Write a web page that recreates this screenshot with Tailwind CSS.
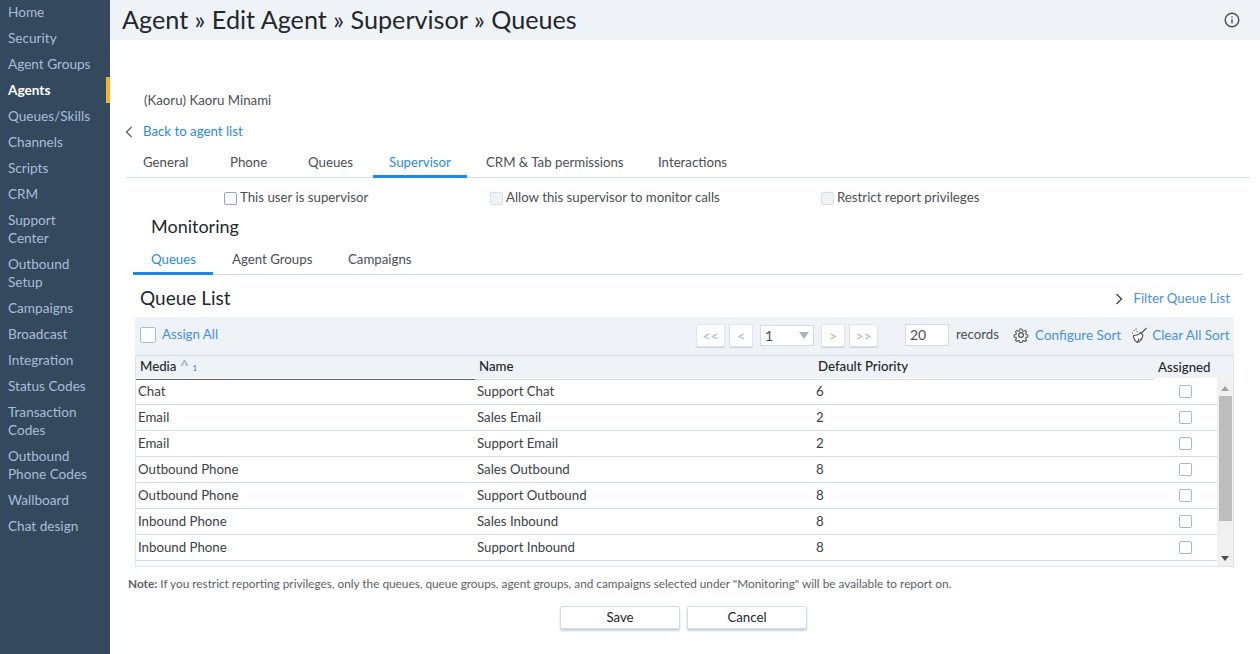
<!DOCTYPE html>
<html lang="en">
<head>
  <meta charset="UTF-8" />
  <title>Agent Supervisor Queues</title>
  <script src="https://cdn.jsdelivr.net/npm/@tailwindcss/browser@4"></script>
</head>
<body class="w-[1260px] h-[654px] overflow-hidden bg-white font-['Lato',sans-serif] text-[13.25px] text-[#4a4f55] flex">

  <!-- sidebar -->
  <nav class="w-[110px] h-full shrink-0 bg-[#34495e] text-[#a9bdd8] text-[13.6px] leading-[18px] flex flex-col">
    <a class="h-[26px] pl-2 pt-[4px] -mt-[1px]">Home</a>
    <a class="h-[26px] pl-2 pt-1">Security</a>
    <a class="h-[26px] pl-2 pt-1">Agent Groups</a>
    <a class="h-[26px] pl-2 pt-1 text-white font-bold border-r-4 border-[#fdb022]">Agents</a>
    <a class="h-[26px] pl-2 pt-1">Queues/Skills</a>
    <a class="h-[26px] pl-2 pt-1">Channels</a>
    <a class="h-[26px] pl-2 pt-1">Scripts</a>
    <a class="h-[26px] pl-2 pt-1">CRM</a>
    <a class="h-[44px] pl-2 pt-1">Support<br />Center</a>
    <a class="h-[44px] pl-2 pt-1">Outbound<br />Setup</a>
    <a class="h-[26px] pl-2 pt-1">Campaigns</a>
    <a class="h-[26px] pl-2 pt-1">Broadcast</a>
    <a class="h-[26px] pl-2 pt-1">Integration</a>
    <a class="h-[26px] pl-2 pt-1">Status Codes</a>
    <a class="h-[44px] pl-2 pt-1">Transaction<br />Codes</a>
    <a class="h-[44px] pl-2 pt-1">Outbound<br />Phone Codes</a>
    <a class="h-[26px] pl-2 pt-1">Wallboard</a>
    <a class="h-[26px] pl-2 pt-1">Chat design</a>
  </nav>

  <main class="flex-1 min-w-0 flex flex-col">
    <!-- page title -->
    <header class="h-10 shrink-0 bg-[#eff3f8] flex items-center justify-between pl-3 pr-5 text-[#23272b]">
      <h1 class="text-[25.2px] leading-[38px] pb-[2px]">Agent » Edit Agent » Supervisor » Queues</h1>
      <svg class="w-4 h-4 text-[#4a4f55]" viewBox="0 0 16 16" fill="none" stroke="currentColor" stroke-width="1.4"><circle cx="8" cy="8" r="6.8" /><path d="M8 7v4.5M8 4.2v1.4" /></svg>
    </header>

    <div class="h-[52px] shrink-0 pl-[34px] pt-[50px] leading-[20px] text-[#4a4f55] box-content -mb-[30px]">(Kaoru) Kaoru Minami</div>

    <div class="h-[26px] shrink-0 mt-[6px] pt-[2px] pl-[15px] flex items-center">
      <svg class="w-2 h-3 text-[#5a6168]" viewBox="0 0 8 12" fill="none" stroke="currentColor" stroke-width="1.3"><path d="M6.5 1 1.500 6l5 5" /></svg>
      <a class="ml-[10px] text-[#2b8ae0]">Back to agent list</a>
    </div>

    <!-- main tabs -->
    <div class="h-[34px] shrink-0 ml-4 mr-[10px] border-b border-[#d3dce6] flex">
      <span class="w-[80px] pl-[17px] pt-[9px]">General</span>
      <span class="w-[77px] pl-[24px] pt-[9px]">Phone</span>
      <span class="w-[90px] pl-[25px] pt-[9px]">Queues</span>
      <span class="w-[94px] -mb-[1px] text-center pt-[9px] text-[#2b8ae0] border-b-[3px] border-[#1e88e5]">Supervisor</span>
      <span class="w-[172px] pl-[19px] pt-[9px]">CRM &amp; Tab permissions</span>
      <span class="pl-[19px] pt-[9px]">Interactions</span>
    </div>

    <!-- supervisor options -->
    <div class="h-[38px] shrink-0 flex items-center pl-[114px] pt-[2px]">
      <span class="w-[266px] flex items-center gap-[3px]"><i class="w-[13px] h-[13px] rounded-[2px] border border-[#8fa6c4] bg-white"></i>This user is supervisor</span>
      <span class="w-[331px] flex items-center gap-[3px]"><i class="w-[13px] h-[13px] rounded-[2px] border border-[#d8dfe8] bg-[#eff3f8]"></i>Allow this supervisor to monitor calls</span>
      <span class="flex items-center gap-[3px]"><i class="w-[13px] h-[13px] rounded-[2px] border border-[#d8dfe8] bg-[#eff3f8]"></i>Restrict report privileges</span>
    </div>

    <h2 class="h-[24px] shrink-0 pl-[41px] text-[18px] leading-[20px] text-[#23272b]">Monitoring</h2>

    <!-- sub tabs -->
    <div class="h-[35px] shrink-0 ml-[23px] mr-[18px] border-b border-[#d3dce6] flex">
      <span class="w-[80px] -mb-[1px] text-center pt-[10px] pl-[1px] text-[#2b8ae0] border-b-[3px] border-[#1e88e5]">Queues</span>
      <span class="w-[117px] pl-[19px] pt-[10px]">Agent Groups</span>
      <span class="pl-[18px] pt-[10px]">Campaigns</span>
    </div>

    <!-- queue list heading -->
    <div class="h-[42px] shrink-0 pl-[30px] pr-[30px] flex items-center justify-between">
      <h3 class="text-[19px] text-[#23272b] pt-[5px]">Queue List</h3>
      <div class="flex items-center gap-[10px] pt-[6px]">
        <svg class="w-2 h-3 text-[#4a4f55]" viewBox="0 0 8 12" fill="none" stroke="currentColor" stroke-width="1.5"><path d="M1.500 1l5 5-5 5" /></svg>
        <a class="text-[#4a90e2]">Filter Queue List</a>
      </div>
    </div>

    <!-- toolbar -->
    <div class="h-[38px] shrink-0 ml-[25px] mr-[26px] pb-[2px] bg-[#eff3f8] flex items-center whitespace-nowrap">
      <i class="ml-[5px] w-4 h-4 rounded-[2px] border border-[#a9bdd8] bg-white"></i>
      <a class="ml-[6px] text-[#4a90e2] w-[534px]">Assign All</a>
      <div class="flex items-center gap-1 text-[#a9b4c2] text-[14px]">
        <button class="w-[29px] h-[23px] bg-white rounded-[2px] border border-[#dde4ec] shadow-[0_1px_1px_#c5d2e2]">&lt;&lt;</button>
        <button class="w-[24px] h-[23px] bg-white rounded-[2px] border border-[#dde4ec] shadow-[0_1px_1px_#c5d2e2]">&lt;</button>
        <div class="ml-[3px] mr-[3px] w-[54px] h-[21px] bg-white border border-[#d3dce6] flex items-center justify-between pl-1 pr-[4px] text-[#4a4f55]">1<i class="border-x-[5px] border-x-transparent border-t-[7px] border-t-[#a9b4c2]"></i></div>
        <button class="w-[24px] h-[23px] bg-white rounded-[2px] border border-[#dde4ec] shadow-[0_1px_1px_#c5d2e2]">&gt;</button>
        <button class="w-[29px] h-[23px] bg-white rounded-[2px] border border-[#dde4ec] shadow-[0_1px_1px_#c5d2e2]">&gt;&gt;</button>
      </div>
      <div class="ml-[27px] w-[44px] h-[22px] bg-white border border-[#d3dce6] pl-1 leading-[20px] text-[#4a4f55] text-[14px]">20</div>
      <span class="ml-[7px] text-[#4a4f55]">records</span>
      <svg class="ml-[14px] w-4 h-4 text-[#4a4f55]" viewBox="0 0 24 24" fill="none" stroke="currentColor" stroke-width="1.7" stroke-linejoin="round"><path d="M10.300 2h3.400l.6 3 2 .9 2.600-1.700 2.400 2.400-1.700 2.600.9 2 3 .6v3.400l-3 .6-.9 2 1.700 2.600-2.400 2.400-2.600-1.700-2 .9-.6 3h-3.400l-.6-3-2-.9-2.600 1.700-2.400-2.400 1.700-2.600-.9-2-3-.6v-3.400l3-.6.9-2-1.700-2.600 2.400-2.400 2.600 1.700 2-.9z" transform="translate(1.200 1.200) scale(.9)" /><circle cx="12" cy="12" r="3.600" /></svg>
      <a class="ml-[6px] text-[#4a90e2] text-[13.5px]">Configure Sort</a>
      <svg class="ml-[10px] w-[16px] h-[16px] text-[#4a4f55]" viewBox="0 0 16 16" fill="none" stroke="currentColor" stroke-width="1.100"><path d="M15.500 1 10 6.500" /><path d="M9.500 5.500C8 7.500 5 8.500 2.500 8.500c0 3 1.500 5.500 4 7 2.500-1 4.800-3.800 5.500-7z" fill="#fff" /><path d="M6.500 15.500 8 11.500M9.500 13.500l1-2.500" /><path d="M2.500 3.500h1M5 1.500v1M1 6h1M5.500 4.500h1" /></svg>
      <a class="ml-[5px] text-[#4a90e2] text-[13.5px]">Clear All Sort</a>
    </div>

    <!-- queues table -->
    <div class="w-[1099px] h-[212px] shrink-0 ml-[25px] border border-t-[#d3dce6] border-[#dde4ec] flex flex-col">
      <div class="h-[22px] shrink-0 bg-[#eff3f8] grid grid-cols-[339px_339px_340px_1fr] text-[#23272b] font-medium leading-[21px]">
        <span class="pl-[4px] border-b border-[#5a6168]">Media <span class="text-[#a9b4c2] font-bold text-[16px] leading-[10px]">^</span> <span class="text-[8px] text-[#2b8ae0]">1</span></span>
        <span class="pl-[4px] border-b border-[#d3dce6]">Name</span>
        <span class="pl-[4px] border-b border-[#d3dce6]">Default Priority</span>
        <span class="pl-[4px] pt-[1px]">Assigned</span>
      </div>
      <div class="flex-1 min-h-0 flex">
        <div class="flex-1 min-w-0 pt-[1px] text-[#3a3f45]">
          <div class="h-[26px] border-b border-[#d3dce6] grid grid-cols-[339px_339px_340px_59px] items-center pl-[2px]"><span>Chat</span><span>Support Chat</span><span>6</span><i class="justify-self-center w-[13px] h-[13px] rounded-[2px] border border-[#a9b8cc] bg-white"></i></div>
          <div class="h-[26px] border-b border-[#d3dce6] grid grid-cols-[339px_339px_340px_59px] items-center pl-[2px]"><span>Email</span><span>Sales Email</span><span>2</span><i class="justify-self-center w-[13px] h-[13px] rounded-[2px] border border-[#a9b8cc] bg-white"></i></div>
          <div class="h-[26px] border-b border-[#d3dce6] grid grid-cols-[339px_339px_340px_59px] items-center pl-[2px]"><span>Email</span><span>Support Email</span><span>2</span><i class="justify-self-center w-[13px] h-[13px] rounded-[2px] border border-[#a9b8cc] bg-white"></i></div>
          <div class="h-[26px] border-b border-[#d3dce6] grid grid-cols-[339px_339px_340px_59px] items-center pl-[2px]"><span>Outbound Phone</span><span>Sales Outbound</span><span>8</span><i class="justify-self-center w-[13px] h-[13px] rounded-[2px] border border-[#a9b8cc] bg-white"></i></div>
          <div class="h-[26px] border-b border-[#d3dce6] grid grid-cols-[339px_339px_340px_59px] items-center pl-[2px]"><span>Outbound Phone</span><span>Support Outbound</span><span>8</span><i class="justify-self-center w-[13px] h-[13px] rounded-[2px] border border-[#a9b8cc] bg-white"></i></div>
          <div class="h-[26px] border-b border-[#d3dce6] grid grid-cols-[339px_339px_340px_59px] items-center pl-[2px]"><span>Inbound Phone</span><span>Sales Inbound</span><span>8</span><i class="justify-self-center w-[13px] h-[13px] rounded-[2px] border border-[#a9b8cc] bg-white"></i></div>
          <div class="h-[26px] border-b border-[#d3dce6] grid grid-cols-[339px_339px_340px_59px] items-center pl-[2px]"><span>Inbound Phone</span><span>Support Inbound</span><span>8</span><i class="justify-self-center w-[13px] h-[13px] rounded-[2px] border border-[#a9b8cc] bg-white"></i></div>
        </div>
        <!-- scrollbar -->
        <div class="w-[16px] shrink-0 bg-[#f0f0f0] flex flex-col items-center">
          <i class="mt-[8px] border-x-[4px] border-x-transparent border-b-[5px] border-b-[#a3a3a3]"></i>
          <i class="mt-[5px] w-[13px] h-[125px] bg-[#bdbdbd]"></i>
          <i class="mt-auto mb-[5px] border-x-[4px] border-x-transparent border-t-[5px] border-t-[#505050]"></i>
        </div>
      </div>
    </div>

    <p class="h-[31px] shrink-0 pl-[18px] pt-[8px] text-[11.8px] leading-[18px] text-[#5a6168]"><b>Note:</b> If you restrict reporting privileges, only the queues, queue groups, agent groups, and campaigns selected under "Monitoring" will be available to report on.</p>

    <div class="flex justify-center gap-[7px] pr-[3px] pt-[8px] text-[#23272b]">
      <button class="w-[120px] h-[23px] bg-white rounded-[2px] border border-[#d3dce6] shadow-[0_2px_2px_#c5d2e2]">Save</button>
      <button class="w-[120px] h-[23px] bg-white rounded-[2px] border border-[#d3dce6] shadow-[0_2px_2px_#c5d2e2]">Cancel</button>
    </div>
  </main>
</body>
</html>
